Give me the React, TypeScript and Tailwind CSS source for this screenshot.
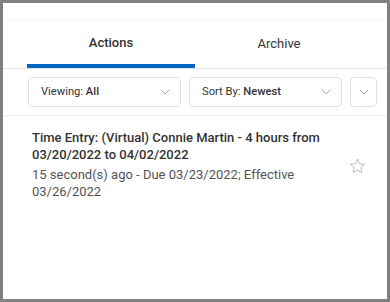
import React from "react";

function Chevron({ className = "" }: { className?: string }) {
  return (
    <svg width="10" height="6" viewBox="0 0 10 6" className={className} fill="none">
      <path d="M0.8 0.8 L5 5 L9.2 0.8" stroke="#a3a8ae" strokeWidth="1" />
    </svg>
  );
}

export default function App() {
  return (
    <div
      className="w-[390px] h-[302px] border-[3px] border-[#808080] bg-white box-border flex flex-col"
      style={{ fontFamily: "Roboto, 'Liberation Sans', sans-serif" }}
    >
      <div className="h-[17px] border-b border-[#f6f6f6]" />
      <div className="flex pl-[24px] pr-[24px] border-b border-[#e3e6ea] h-[49px]">
        <div className="w-[168px] flex flex-col">
          <div className="flex-1 flex items-center justify-center text-[13px] font-medium text-[#333] pt-[1px]">
            Actions
          </div>
          <div className="h-[4px] bg-[#0565c1]" />
        </div>
        <div className="w-[168px] flex items-center justify-center text-[13px] text-[#333] pb-[1px]">
          Archive
        </div>
      </div>
      <div className="flex items-center pl-[25px] h-[47px] border-b border-[#eceef0]">
        <div className="w-[153px] h-[30px] border border-[#dfe2e6] rounded-[4px] flex items-center justify-between pl-[12px] pr-[10px] text-[11.2px] text-[#333]">
          <span>
            Viewing: <span className="font-medium">All</span>
          </span>
          <Chevron />
        </div>
        <div className="w-[153px] h-[30px] ml-[8px] border border-[#dfe2e6] rounded-[4px] flex items-center justify-between pl-[12px] pr-[10px] text-[11.2px] text-[#333]">
          <span>
            Sort By: <span className="font-medium">Newest</span>
          </span>
          <Chevron />
        </div>
        <div className="w-[27px] h-[30px] ml-[8px] border border-[#dfe2e6] rounded-[4px] flex items-center justify-center">
          <Chevron />
        </div>
      </div>
      <div className="flex pl-[29px] pr-[21px] pt-[13px]">
        <div className="flex-1">
          <div className="text-[13px] font-medium text-[#333] leading-[17px]">
            Time Entry: (Virtual) Connie Martin - 4 hours from 03/20/2022 to 04/02/2022
          </div>
          <div className="text-[13px] text-[#555] leading-[17px] mt-[3px]">
            15 second(s) ago - Due 03/23/2022; Effective 03/26/2022
          </div>
        </div>
        <div className="w-[17px] flex items-start pt-[29px] ml-[20px]">
          <svg width="17" height="16" viewBox="0 0 24 23" fill="none">
            <path
              d="M12 1.5 L14.9 8.3 L22.3 8.9 L16.7 13.8 L18.4 21 L12 17.2 L5.6 21 L7.3 13.8 L1.7 8.9 L9.1 8.3 Z"
              stroke="#b0b0b0"
              strokeWidth="1.2"
              strokeLinejoin="round"
            />
          </svg>
        </div>
      </div>
    </div>
  );
}
